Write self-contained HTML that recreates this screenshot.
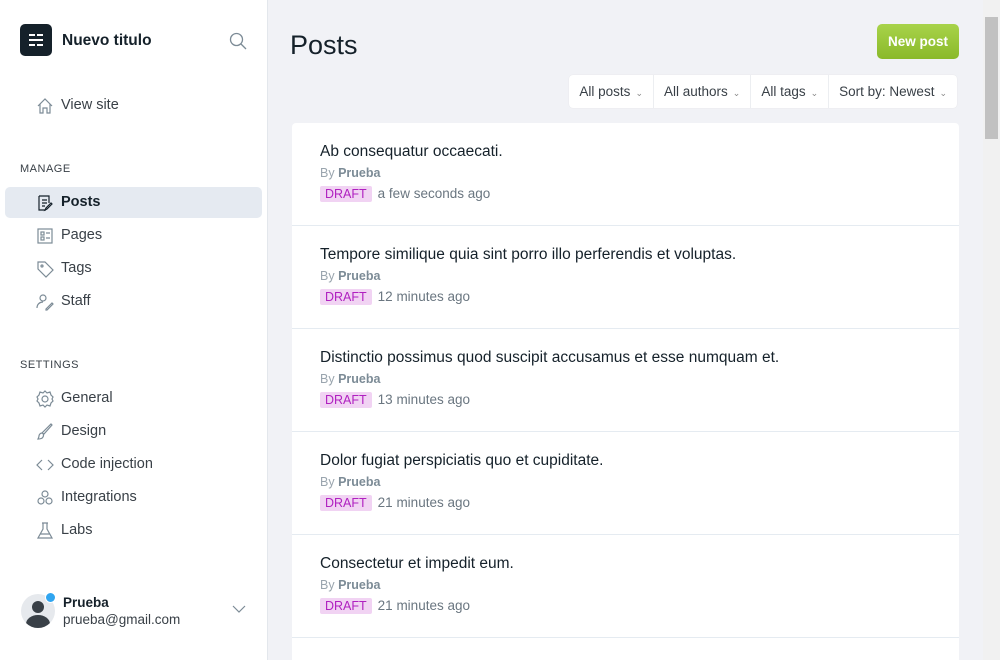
<!DOCTYPE html>
<html style="width:1000px;height:660px;overflow:hidden"><head><style>
*{box-sizing:border-box;margin:0;padding:0}
body{width:1000px;height:660px;overflow:hidden;font-family:"Liberation Sans",sans-serif;background:#f1f2f6;position:relative;color:#15212a}
.side{position:absolute;left:0;top:0;width:268px;height:660px;background:#fff;border-right:1px solid #e3e7ec}
.logo{position:absolute;left:20px;top:24px;width:32px;height:32px;background:#15212a;border-radius:5px}
.title{position:absolute;left:62px;top:32px;font-size:15.5px;font-weight:bold;color:#15212a}
.nav{position:absolute;left:5px;width:257px;height:31px;font-size:14.5px;color:#394047;line-height:31px;padding-left:56px}
.nav svg{position:absolute;left:31px;top:7px}
.nav.act{background:#e5eaf1;border-radius:5px;font-weight:bold;color:#15212a}
.sec{position:absolute;left:20px;font-size:11px;letter-spacing:.5px;color:#394047}
.main h1{position:absolute;left:290px;top:30px;font-size:27px;font-weight:normal;color:#15212a}
.btn{position:absolute;left:877px;top:24px;width:82px;height:35px;border-radius:5px;background:linear-gradient(#a8d34a,#8ab92a);color:#fff;font-weight:bold;font-size:13.5px;text-align:center;line-height:35px}
.filters{position:absolute;right:43px;top:75px;height:33px;background:#fff;border-radius:4px;display:flex;box-shadow:0 0 1px rgba(0,0,0,.1)}
.filters div{font-size:13.5px;color:#394047;line-height:33px;padding:0 10px;border-right:1px solid #eceef1}
.filters div:last-child{border:none}
.filters span{font-size:9px;color:#888;margin-left:5px}
.card{position:absolute;left:292px;top:123px;width:667px;height:537px;background:#fff;border-radius:4px 4px 0 0;overflow:hidden}
.row{height:103px;border-bottom:1px solid #e5ebf1;padding:20px 0 0 28px}
.row h3{font-size:15.5px;font-weight:normal;color:#15212a;margin-bottom:5px}
.by{font-size:12.5px;color:#9aa5ae;margin-bottom:5px}.by b{color:#7c8b96}
.d{display:inline-block;background:#f1d3f3;color:#b021c0;font-size:12.5px;padding:1px 5px;border-radius:2px;margin-right:6px}
.t{font-size:13.5px;color:#6a7680}
.sb{position:absolute;left:983px;top:0;width:17px;height:660px;background:#f1f1f1}
.sb div{position:absolute;left:2px;top:17px;width:13px;height:122px;background:#c1c1c1}
</style></head><body>
<div class="side">
<div class="logo"><svg width="32" height="32"><g fill="#fff"><rect x="9" y="10" width="6" height="2"/><rect x="17" y="10" width="6" height="2"/><rect x="9" y="15" width="14" height="2"/><rect x="9" y="20" width="6" height="2"/><rect x="17" y="20" width="6" height="2"/></g></svg></div>
<div class="title">Nuevo titulo</div>
<svg style="position:absolute;left:229px;top:32px" width="18" height="18" fill="none" stroke="#7c8b96" stroke-width="1.3"><circle cx="7.5" cy="7.5" r="6"/><path d="M12 12l5 5"/></svg>
<div class="nav" style="top:90px"><svg width="18" height="18" fill="none" stroke="#7c8b96" stroke-width="1.2"><path d="M2 9l7-7 7 7M4 7v9h3v-5h4v5h3V7"/></svg>View site</div>
<div class="sec" style="top:163px">MANAGE</div>
<div class="nav act" style="top:187px"><svg width="18" height="18" fill="none" stroke="#15212a" stroke-width="1.2"><path d="M3 2h10v7M3 2v14h7M6 6h5M6 9h5M6 12h3M16 10l-5 5-2 1 1-2 5-5z"/></svg>Posts</div>
<div class="nav" style="top:220px"><svg width="18" height="18" fill="none" stroke="#7c8b96" stroke-width="1.2"><rect x="2" y="2" width="14" height="14"/><rect x="5" y="5" width="3" height="3"/><rect x="5" y="10" width="3" height="3"/><path d="M10 6h4M10 11h4"/></svg>Pages</div>
<div class="nav" style="top:253px"><svg width="18" height="18" fill="none" stroke="#7c8b96" stroke-width="1.2"><path d="M2 2h7l8 8-7 7-8-8z"/><circle cx="6" cy="6" r="1"/></svg>Tags</div>
<div class="nav" style="top:286px"><svg width="18" height="18" fill="none" stroke="#7c8b96" stroke-width="1.2"><circle cx="7" cy="5" r="3"/><path d="M1 15c0-4 3-6 6-6M10 16l6-6 1 1-6 6h-1z"/></svg>Staff</div>
<div class="sec" style="top:359px">SETTINGS</div>
<div class="nav" style="top:383px"><svg width="18" height="18" fill="none" stroke="#7c8b96" stroke-width="1.2"><circle cx="9" cy="9" r="3"/><path d="M9 1l2 2 3-1 1 3 2 2-1 2 1 2-2 2-1 3-3-1-2 2-2-2-3 1-1-3-2-2 1-2-1-2 2-2 1-3 3 1z"/></svg>General</div>
<div class="nav" style="top:416px"><svg width="18" height="18" fill="none" stroke="#7c8b96" stroke-width="1.2"><path d="M16 2L8 11l-2-1 9-9zM6 10c-2 0-3 2-3 3s-1 3-1 3 4 0 5-2 0-3 0-3"/></svg>Design</div>
<div class="nav" style="top:449px"><svg width="18" height="18" fill="none" stroke="#7c8b96" stroke-width="1.2"><path d="M6 4L1 9l5 5M12 4l5 5-5 5"/></svg>Code injection</div>
<div class="nav" style="top:482px"><svg width="18" height="18" fill="none" stroke="#7c8b96" stroke-width="1.2"><circle cx="9" cy="5" r="3"/><circle cx="5" cy="12" r="3"/><circle cx="13" cy="12" r="3"/></svg>Integrations</div>
<div class="nav" style="top:515px"><svg width="18" height="18" fill="none" stroke="#7c8b96" stroke-width="1.2"><path d="M6 1h6M7 1v6L2 16h14L11 7V1M4 12h10"/></svg>Labs</div>
<div style="position:absolute;left:21px;top:594px;width:34px;height:34px;border-radius:50%;background:#e6e9ed;overflow:hidden"><div style="position:absolute;left:11px;top:7px;width:12px;height:12px;border-radius:50%;background:#394047"></div><div style="position:absolute;left:5px;top:21px;width:24px;height:18px;border-radius:50%;background:#394047"></div></div>
<div style="position:absolute;left:45px;top:592px;width:11px;height:11px;border-radius:50%;background:#30a5f0;border:1.5px solid #fff"></div>
<div style="position:absolute;left:63px;top:595px;font-size:13.5px;font-weight:bold;color:#15212a">Prueba</div>
<div style="position:absolute;left:63px;top:612px;font-size:13.5px;color:#394047">prueba@gmail.com</div>
<svg style="position:absolute;left:232px;top:605px" width="14" height="9" fill="none" stroke="#7c8b96" stroke-width="1.2"><path d="M1 1l6 6 6-6"/></svg>
</div>
<div class="main">
<h1>Posts</h1>
<div class="btn">New post</div>
<div class="filters"><div>All posts<span>⌄</span></div><div>All authors<span>⌄</span></div><div>All tags<span>⌄</span></div><div>Sort by: Newest<span>⌄</span></div></div>
<div class="card">
<div class="row"><h3>Ab consequatur occaecati.</h3><div class="by">By <b>Prueba</b></div><span class="d">DRAFT</span><span class="t">a few seconds ago</span></div>
<div class="row"><h3>Tempore similique quia sint porro illo perferendis et voluptas.</h3><div class="by">By <b>Prueba</b></div><span class="d">DRAFT</span><span class="t">12 minutes ago</span></div>
<div class="row"><h3>Distinctio possimus quod suscipit accusamus et esse numquam et.</h3><div class="by">By <b>Prueba</b></div><span class="d">DRAFT</span><span class="t">13 minutes ago</span></div>
<div class="row"><h3>Dolor fugiat perspiciatis quo et cupiditate.</h3><div class="by">By <b>Prueba</b></div><span class="d">DRAFT</span><span class="t">21 minutes ago</span></div>
<div class="row"><h3>Consectetur et impedit eum.</h3><div class="by">By <b>Prueba</b></div><span class="d">DRAFT</span><span class="t">21 minutes ago</span></div>
</div>
</div>
<div class="sb"><div></div></div>
</body></html>
